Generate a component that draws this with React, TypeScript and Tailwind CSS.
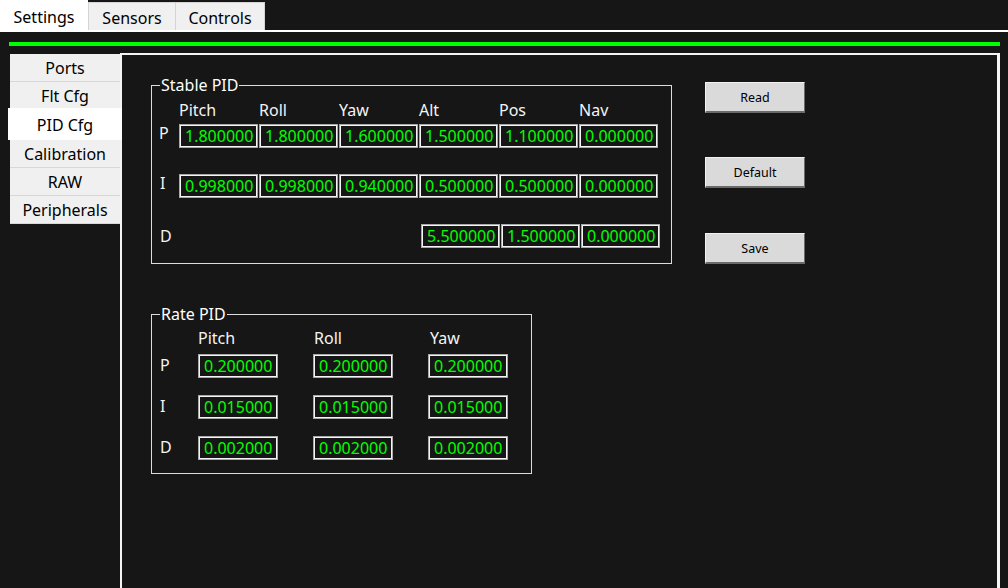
import React from "react";

const font = { fontFamily: '"Noto Sans", "Open Sans", sans-serif' };

function Field({ v, w = "w-[79px]" }: { v: string; w?: string }) {
  return (
    <div
      className={`${w} h-[24px] shrink-0 border border-[#a8a8a8] shadow-[inset_0_0_0_1px_#f4f4f4] pl-[5px] flex items-center text-[16px] leading-[20px] text-[#00ff00] bg-[#161616]`}
    >
      {v}
    </div>
  );
}

function GroupBox({
  title,
  className,
  children,
}: {
  title: string;
  className: string;
  children: React.ReactNode;
}) {
  return (
    <div className={`relative border border-[#dcdcdc] ${className}`}>
      <div className="absolute -top-[12px] left-[8px] bg-[#161616] px-[1px] text-[16px] leading-[22px] text-white">
        {title}
      </div>
      {children}
    </div>
  );
}

function Btn({ label }: { label: string }) {
  return (
    <div className="w-[100px] h-[31px] pt-[2px] flex items-center justify-center bg-[#dadada] border border-[#f2f2f2] border-b-[#6a6a6a] border-r-[#6a6a6a] border-b-2 text-[12.5px] text-black">
      {label}
    </div>
  );
}

export default function App() {
  const stableHeaders = ["Pitch", "Roll", "Yaw", "Alt", "Pos", "Nav"];
  const stableP = ["1.800000", "1.800000", "1.600000", "1.500000", "1.100000", "0.000000"];
  const stableI = ["0.998000", "0.998000", "0.940000", "0.500000", "0.500000", "0.000000"];
  const stableD = ["5.500000", "1.500000", "0.000000"];
  const rateRows: [string, string[]][] = [
    ["P", ["0.200000", "0.200000", "0.200000"]],
    ["I", ["0.015000", "0.015000", "0.015000"]],
    ["D", ["0.002000", "0.002000", "0.002000"]],
  ];
  const sideTabs = ["Ports", "Flt Cfg", "PID Cfg", "Calibration", "RAW", "Peripherals"];

  return (
    <div
      className="w-[1008px] h-[588px] overflow-hidden bg-[#161616] flex flex-col"
      style={font}
    >
      {/* top tab bar */}
      <div className="flex h-[32px] shrink-0">
        <div className="w-[88px] h-[32px] pt-[2px] bg-white flex items-center justify-center text-[16px] text-black">
          Settings
        </div>
        <div className="flex-1 flex border-b-2 border-white">
          <div className="mt-[2px] h-[28px] w-[88px] pt-[2px] bg-[#f0f0f0] border border-b-0 border-[#d4d4d4] flex items-center justify-center text-[16px] text-black">
            Sensors
          </div>
          <div className="mt-[2px] h-[28px] w-[89px] pt-[2px] bg-[#f0f0f0] border border-l-0 border-b-0 border-[#d4d4d4] flex items-center justify-center text-[16px] text-black">
            Controls
          </div>
        </div>
      </div>

      {/* green line */}
      <div className="mt-[10px] ml-[9px] w-[991px] h-[4px] bg-[#00ff00] shrink-0" />

      {/* main area */}
      <div className="flex flex-1 mt-[7px]">
        <div className="w-[120px] shrink-0 pl-[10px] pt-[1px] flex flex-col">
          {sideTabs.map((t) =>
            t === "PID Cfg" ? (
              <div
                key={t}
                className="relative z-10 -mt-[2px] -ml-[2px] -mr-[2px] h-[32px] pt-[1px] bg-white flex items-center justify-center text-[16px] text-black"
              >
                {t}
              </div>
            ) : (
              <div
                key={t}
                className="h-[28px] pt-[1px] bg-[#f0f0f0] border-b border-[#d8d8d8] flex items-center justify-center text-[16px] text-black"
              >
                {t}
              </div>
            )
          )}
        </div>

        <div className="w-[880px] shrink-0 border-l-2 border-t-2 border-r-[3px] border-[#f4f4f4] flex pl-[29px] pt-[27px] items-start">
          <div className="flex flex-col mt-[3px]">
            <GroupBox title="Stable PID" className="w-[521px] h-[179px]">
              <div className="flex pt-[13px] pl-[27px]">
                {stableHeaders.map((h) => (
                  <div key={h} className="w-[80px] text-[16px] leading-[22px] text-[#f4f4f4]">
                    {h}
                  </div>
                ))}
              </div>
              <div className="flex items-start">
                <div className="w-[27px] pl-[7px] mt-[1px] text-[16px] leading-[22px] text-[#f4f4f4]">P</div>
                <div className="flex gap-[1px] mt-[3px]">
                  {stableP.map((v, i) => (
                    <Field key={i} v={v} />
                  ))}
                </div>
              </div>
              <div className="flex items-start mt-[24px]">
                <div className="w-[27px] pl-[8px] text-[16px] leading-[22px] text-[#f4f4f4]">I</div>
                <div className="flex gap-[1px] mt-[2px]">
                  {stableI.map((v, i) => (
                    <Field key={i} v={v} w="w-[79px]" />
                  ))}
                </div>
              </div>
              <div className="flex items-start mt-[24px]">
                <div className="w-[27px] pl-[8px] text-[16px] leading-[22px] text-[#f4f4f4] mt-[3px]">D</div>
                <div className="flex gap-[1px] mt-[2px] ml-[242px]">
                  {stableD.map((v, i) => (
                    <Field key={i} v={v} />
                  ))}
                </div>
              </div>
            </GroupBox>

            <GroupBox title="Rate PID" className="w-[381px] h-[160px] mt-[50px]">
              <div className="flex pt-[12px] pl-[46px] text-[16px] leading-[22px] text-[#f4f4f4]">
                <div className="w-[116px]">Pitch</div>
                <div className="w-[116px]">Roll</div>
                <div>Yaw</div>
              </div>
              <div className="flex flex-col gap-[17px] mt-[5px]">
                {rateRows.map(([l, vals]) => (
                  <div key={l} className="flex items-center">
                    <div className="w-[46px] pl-[8px] -mt-[2px] text-[16px] leading-[22px] text-[#f4f4f4]">
                      {l}
                    </div>
                    <div className="flex gap-[35px]">
                      {vals.map((v, i) => (
                        <Field key={i} v={v} w="w-[80px]" />
                      ))}
                    </div>
                  </div>
                ))}
              </div>
            </GroupBox>
          </div>

          <div className="ml-[33px] flex flex-col">
            <Btn label="Read" />
            <div className="h-[44px]" />
            <Btn label="Default" />
            <div className="h-[45px]" />
            <Btn label="Save" />
          </div>
        </div>
      </div>
    </div>
  );
}
